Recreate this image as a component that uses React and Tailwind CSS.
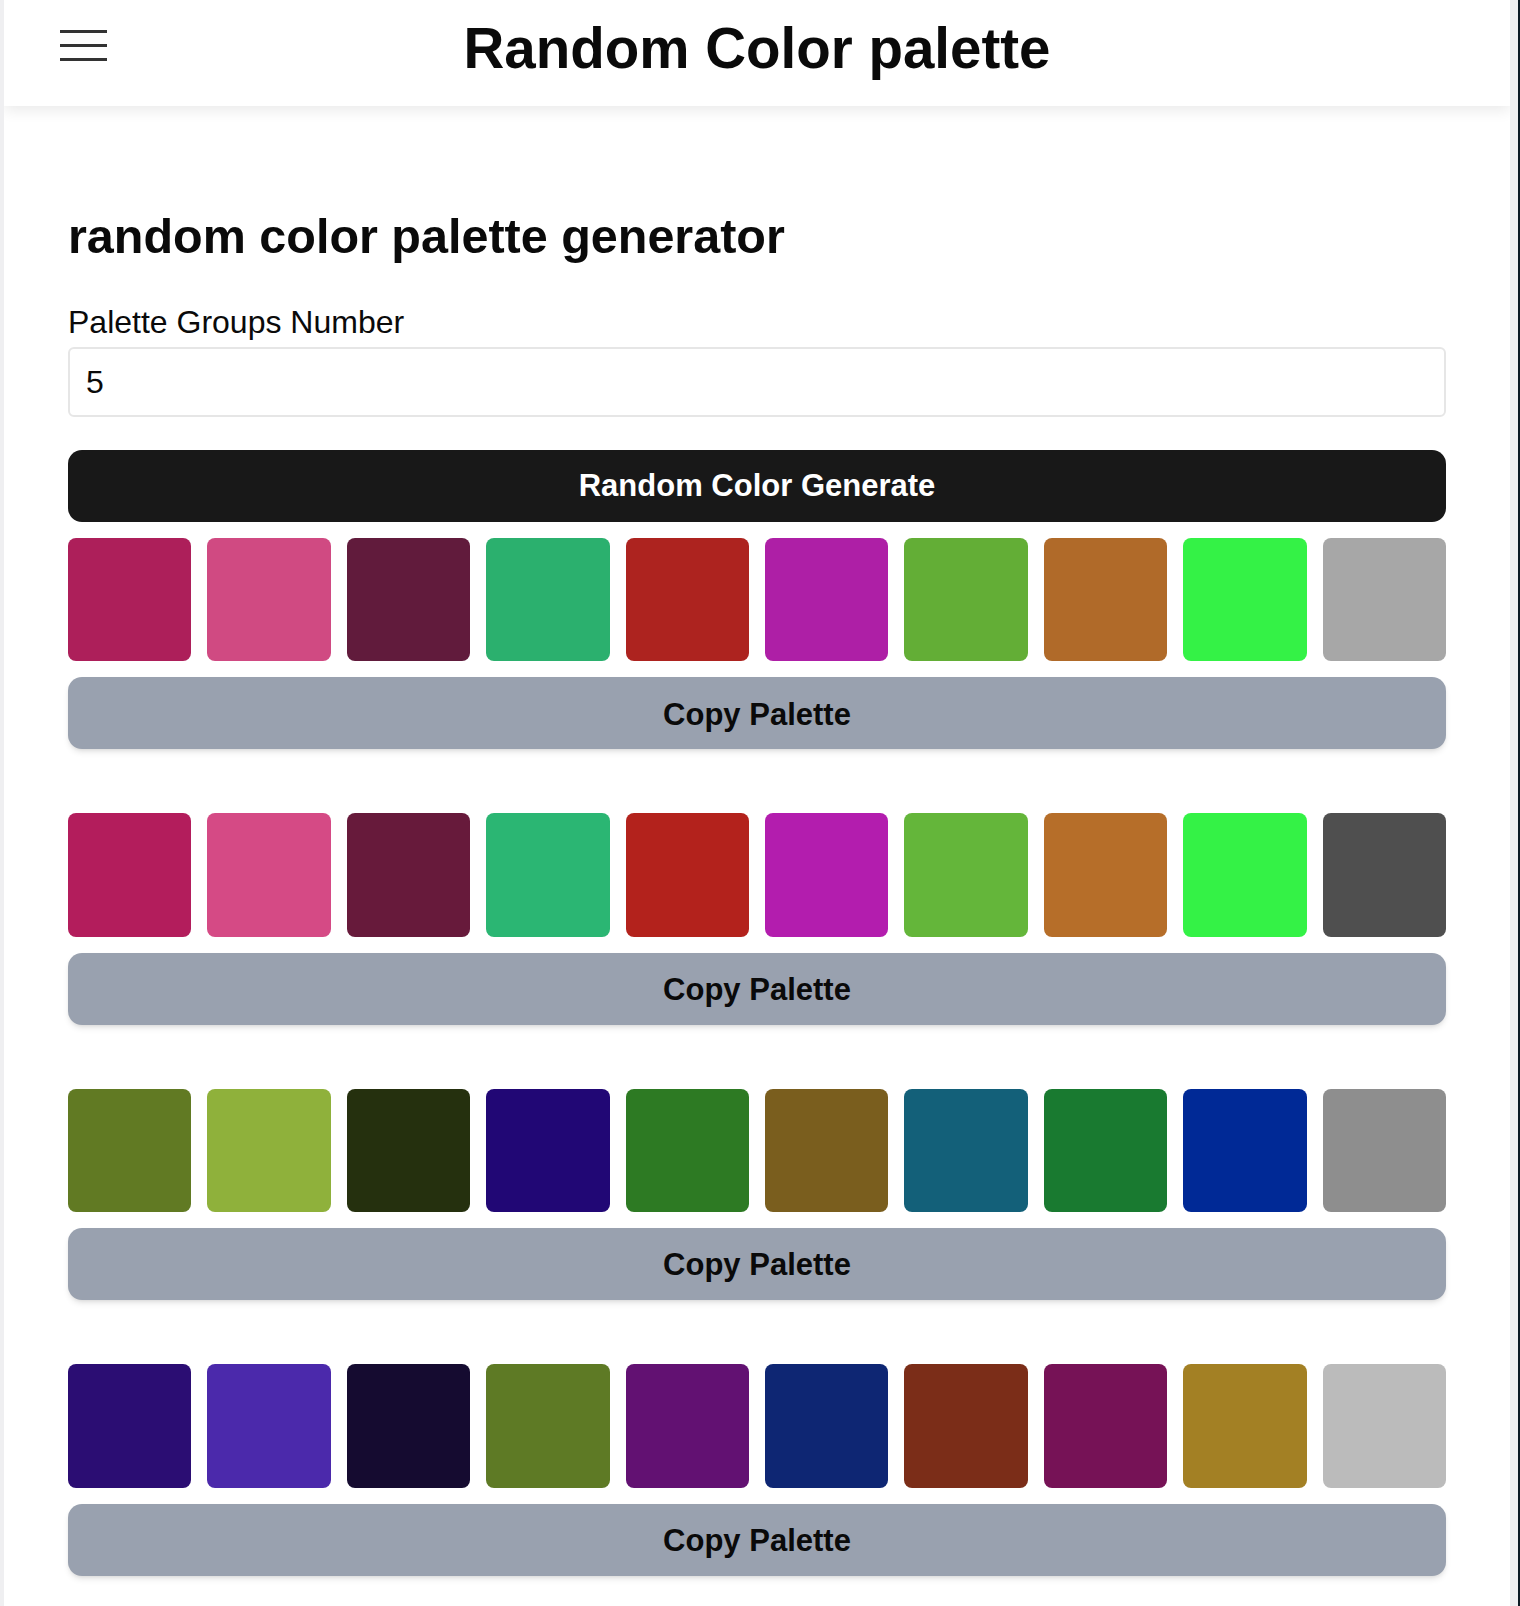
import React, { useState } from "react";

// colour groups as on screen (the rest fall below the fold)
const palettes = [
  ["#ad1f5a", "#d04a82", "#611b3c", "#2bb06e", "#ad231f", "#ae1fa6", "#63ae36", "#b06a29", "#34f246", "#a7a7a7"],
  ["#b31d5c", "#d54a85", "#671a3b", "#2bb673", "#b3221c", "#b31dae", "#64b63a", "#b66e29", "#34f246", "#4f4f4f"],
  ["#617a23", "#8fb13b", "#25300e", "#210775", "#2d7a23", "#7a5e1e", "#136079", "#197a30", "#002996", "#8e8e8e"],
  ["#2b0d73", "#4b29ab", "#150b30", "#5e7a25", "#621172", "#0e2673", "#7b2d18", "#761256", "#a38024", "#bbbbbb"],
];

const Palette = ({ colors }) => {
  return (
    <div className="mb-16">
      <div className="grid grid-cols-10 gap-4">
        {colors.map((c, i) => (
          <div key={i} className="aspect-square rounded-lg" style={{ backgroundColor: c }} />
        ))}
      </div>
      <button className="mt-4 h-[72px] w-full rounded-[14px] bg-gray-400 pt-[3px] text-[31px] font-bold text-[#0a0a0a] shadow-md">
        Copy Palette
      </button>
    </div>
  );
};

const App = () => {
  const [count, setCount] = useState("5");

  return (
    <div className="flex h-[1606px] w-full overflow-hidden bg-[#0c1a24] font-['Liberation_Sans',Arial,sans-serif] text-[#0a0a0a]">
      <div className="flex h-full w-[1518px] flex-col overflow-hidden border-l-4 border-r-8 border-[#efeff1] bg-white">
        <header className="relative z-10 grid h-[106px] shrink-0 grid-cols-[1fr_auto_1fr] bg-white shadow-[0_4px_14px_rgba(0,0,0,0.09)]">
          <div className="flex flex-col gap-[11px] pl-14 pt-[30px]">
            <span className="block h-[3px] w-[47px] bg-[#333]" />
            <span className="block h-[3px] w-[47px] bg-[#333]" />
            <span className="block h-[3px] w-[47px] bg-[#333]" />
          </div>
          <h1 className="mt-5 text-[56.5px] font-bold leading-[57px]">Random Color palette</h1>
          <div />
        </header>

        <main className="px-16 pt-[106px]">
          <h2 className="text-[48.5px] font-bold leading-[48px]">random color palette generator</h2>
          <label htmlFor="groups" className="mt-[46px] block text-[32px] leading-none">
            Palette Groups Number
          </label>
          <input
            id="groups"
            type="text"
            value={count}
            onChange={(e) => setCount(e.target.value)}
            className="mt-[9px] block h-[70px] w-full rounded-md border-2 border-[#e6e6e6] px-4 text-[32px] outline-none"
          />
          <button className="mt-[33px] h-[72px] w-full rounded-[14px] bg-[#181818] text-[31px] font-bold text-white">
            Random Color Generate
          </button>
          <div className="mt-4">
            {palettes.map((p, i) => (
              <Palette key={i} colors={p} />
            ))}
          </div>
        </main>
      </div>
    </div>
  );
};

export default App;
